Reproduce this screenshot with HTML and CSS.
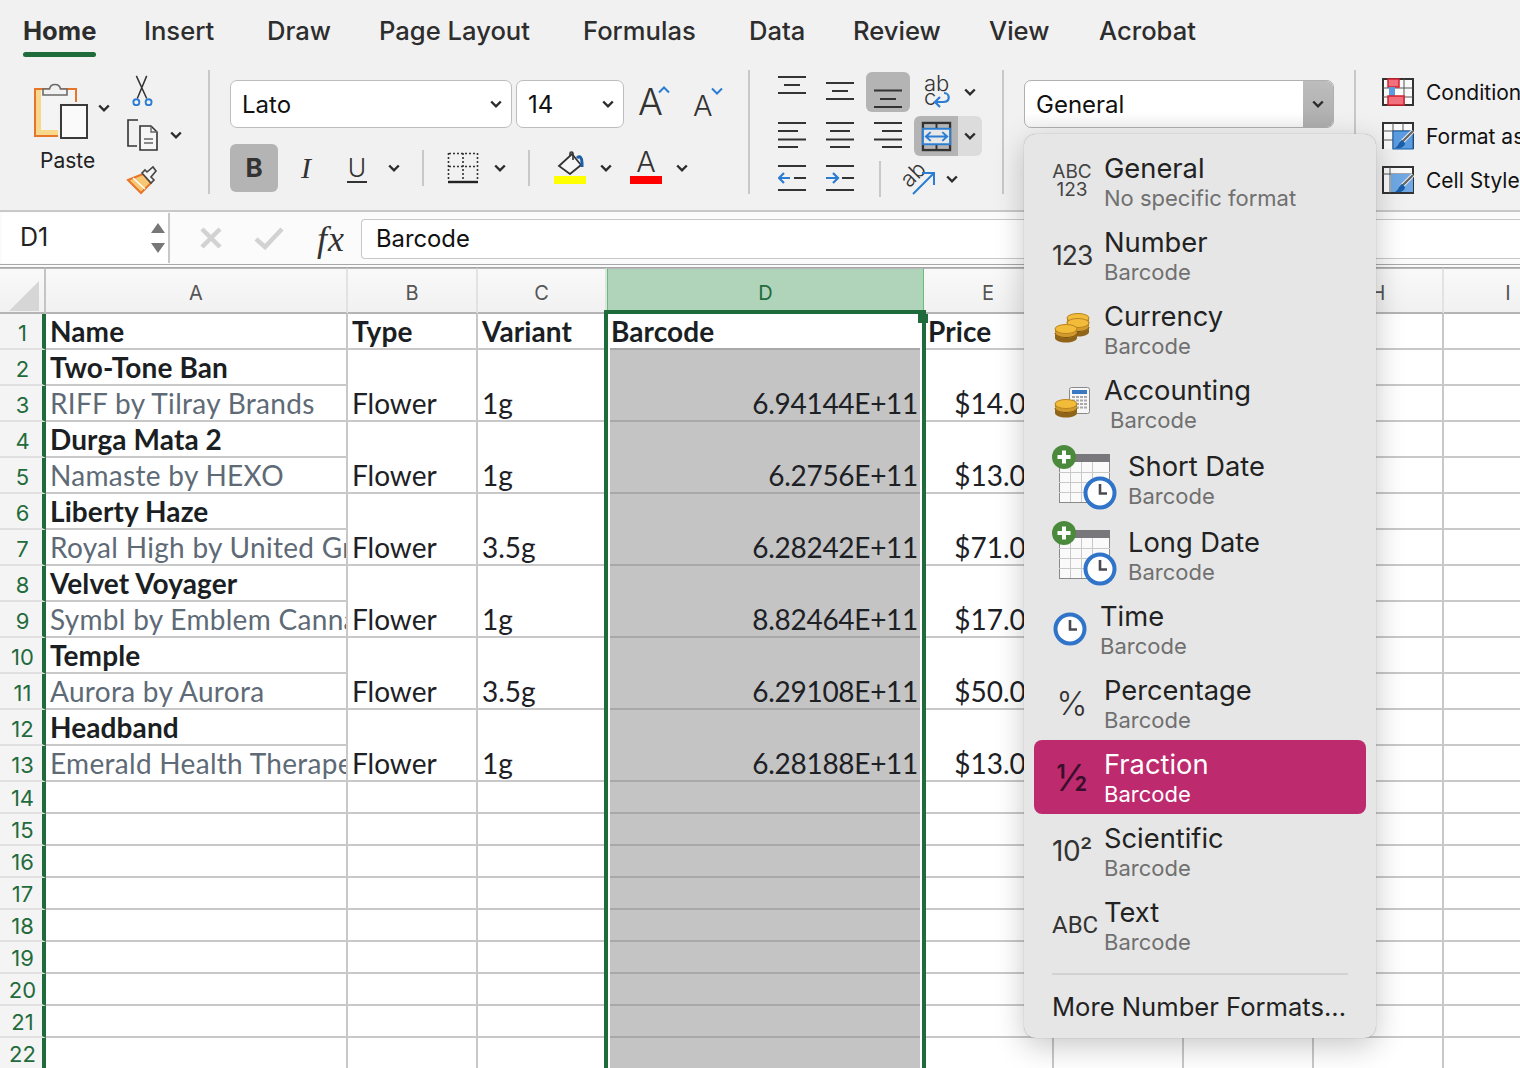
FILE: index.html
```html
<!DOCTYPE html>
<html lang="en">
<head>
<meta charset="utf-8">
<title>Excel number format menu</title>
<link rel="stylesheet" href="styles.css">
</head>
<body>
<svg class="defs" aria-hidden="true">
  <symbol id="chev" viewBox="0 0 12 8"><path d="M1.2 1.5 6 6.3 10.8 1.5" fill="none" stroke="#2b2b2b" stroke-width="2.4"/></symbol>
  <symbol id="clock" viewBox="0 0 34 34"><circle cx="17" cy="17" r="14.5" fill="#fff" stroke="#2f74c9" stroke-width="4"/><path d="M17 8v9.500h7" fill="none" stroke="#4a4a50" stroke-width="2.600"/></symbol>
  <symbol id="datei" viewBox="0 0 66 66">
    <rect x="7.500" y="9.500" width="50" height="48" fill="#fafafa" stroke="#8a8a8a"/>
    <rect x="7" y="9" width="51" height="8" fill="#77777c"/>
    <path d="M7 27.500h51M7 37.500h51M7 47.500h51M18.500 17v40M29.500 17v40M40.500 17v40" stroke="#c9c9c9" fill="none"/>
    <circle cx="12" cy="12" r="12" fill="#4b8a3c"/>
    <path d="M12 5.500v13M5.500 12h13" stroke="#fff" stroke-width="4"/>
    <use href="#clock" x="31" y="31" width="34" height="34"/>
  </symbol>
  <symbol id="coin" viewBox="0 0 24 20">
    <path d="M1 5v9c0 2.500 5 4.500 11 4.500s11-2 11-4.500V5z" fill="#8f6318"/>
    <path d="M1 9.500c0 2.500 5 4.500 11 4.500s11-2 11-4.500v-2H1z" fill="#d29a2c"/>
    <path d="M1 9c0 2.500 5 4.500 11 4.500S23 11.500 23 9" fill="none" stroke="#7a5212"/>
    <ellipse cx="12" cy="5" rx="11" ry="4.500" fill="#f3bb3a" stroke="#b98520"/>
  </symbol>
</svg>

<header class="tabs">
  <span class="tab active">Home</span>
  <span class="tab">Insert</span>
  <span class="tab">Draw</span>
  <span class="tab">Page Layout</span>
  <span class="tab">Formulas</span>
  <span class="tab">Data</span>
  <span class="tab">Review</span>
  <span class="tab">View</span>
  <span class="tab">Acrobat</span>
</header>

<section class="ribbon">
  <div class="group clipboard">
    <div class="paste">
      <div class="paste-top">
        <svg class="ic-paste" viewBox="0 0 56 62">
          <rect x="1" y="9" width="41" height="47" fill="#f8d98c" stroke="#e8762a" stroke-width="2"/>
          <rect x="7" y="10" width="34" height="40" fill="#f4f4f4"/>
          <path d="M9 15V9h6.500c1-6 10-6 11 0H33v6z" fill="#f1f1f1" stroke="#6a6a6a" stroke-width="1.600"/>
          <rect x="24" y="22" width="32" height="40" fill="#f1f1f1"/>
          <rect x="27" y="25" width="26" height="33" fill="#fafafa" stroke="#3a3a3a" stroke-width="2"/>
        </svg>
        <svg class="chev chev-paste"><use href="#chev"/></svg>
      </div>
      <span class="paste-label">Paste</span>
    </div>
    <div class="clip-tools">
      <svg class="ic32" viewBox="0 0 32 34">
        <path d="M10 2 21 26M21 2 11 26" stroke="#333" stroke-width="1.600" fill="none"/>
        <circle cx="10" cy="30" r="3.200" fill="none" stroke="#2b7cd3" stroke-width="2"/>
        <circle cx="23" cy="30" r="3.200" fill="none" stroke="#2b7cd3" stroke-width="2"/>
      </svg>
      <div class="clip-row">
        <svg class="ic32" viewBox="0 0 32 32">
          <path d="M12 1H2v26h9" fill="none" stroke="#333" stroke-width="1.600"/>
          <path d="M14 7h11l6 6v18H14z" fill="#f6f6f6" stroke="#333" stroke-width="1.600"/>
          <path d="M25 7v6h6M18 20h9M18 24h9" fill="none" stroke="#666" stroke-width="1.400"/>
        </svg>
        <svg class="chev chev-copy"><use href="#chev"/></svg>
      </div>
      <svg class="ic32" viewBox="0 0 32 32">
        <path d="M2 16l15-6 8 9-10 10z" fill="#f7c773" stroke="#e8762a" stroke-width="2"/>
        <path d="M7 14l12 11" stroke="#fff" stroke-width="1.500"/>
        <path d="M16 9l9 10 3-3-3-3 5-6-3-4-6 5-2-2z" fill="#f4f4f4" stroke="#444" stroke-width="1.600"/>
      </svg>
    </div>
  </div>
  <i class="vsep"></i>

  <div class="group font">
    <div class="font-top">
      <div class="select sel-font"><span>Lato</span><svg class="chev"><use href="#chev"/></svg></div>
      <div class="select sel-size"><span>14</span><svg class="chev"><use href="#chev"/></svg></div>
      <div class="grow-a">A<svg class="caret" viewBox="0 0 12 8"><path d="M1 6.500 6 1.500 11 6.500" fill="none" stroke="#2b7cd3" stroke-width="2"/></svg></div>
      <div class="shrink-a">A<svg class="caret" viewBox="0 0 12 8"><path d="M1 1.500 6 6.500 11 1.500" fill="none" stroke="#2b7cd3" stroke-width="2"/></svg></div>
    </div>
    <div class="font-row">
      <b class="btn-b">B</b>
      <em class="btn-i">I</em>
      <span class="btn-u">U</span>
      <svg class="chev"><use href="#chev"/></svg>
      <i class="hsep"></i>
      <svg class="ic32" viewBox="0 0 32 32">
        <path d="M2 1.500h28M2 14.500h28M1.500 1v27M30.500 1v27M16 1v27" fill="none" stroke="#333" stroke-width="1.600" stroke-dasharray="2 2"/>
        <path d="M1 30h30" stroke="#222" stroke-width="2.400"/>
      </svg>
      <svg class="chev"><use href="#chev"/></svg>
      <i class="hsep"></i>
      <div class="colour">
        <svg class="ic-fill" viewBox="0 0 32 24">
          <path d="M5 15 18 3l9 11-11 9z" fill="#f6f6f6" stroke="#333" stroke-width="1.800"/>
          <path d="M16 5V2.500c0-2 3-2 3 0V9" fill="none" stroke="#333" stroke-width="1.600"/>
          <path d="M23 7c3-3 5 0 5 5v4" fill="none" stroke="#1a5fa8" stroke-width="3"/>
        </svg>
        <i class="bar bar-yellow"></i>
      </div>
      <svg class="chev"><use href="#chev"/></svg>
      <div class="colour">
        <span class="font-a">A</span>
        <i class="bar bar-red"></i>
      </div>
      <svg class="chev"><use href="#chev"/></svg>
    </div>
  </div>
  <i class="vsep"></i>

  <div class="group align">
    <svg class="ic-al ic-tall" viewBox="0 0 28 40"><path d="M0 5h28M6 13h16M0 21h28" stroke="#333" stroke-width="2"/></svg>
    <svg class="ic-al ic-tall" viewBox="0 0 28 40"><path d="M0 11h28M6 19h16M0 27h28" stroke="#333" stroke-width="2"/></svg>
    <div class="al-on"><svg class="ic-al ic-tall" viewBox="0 0 28 40"><path d="M0 18.500h28M6 27h16M0 35h28" stroke="#333" stroke-width="2"/></svg></div>
    <div class="wrap">ab<br>c<svg class="wrap-arrow" viewBox="0 0 18 18"><path d="M11 2c6 0 7 9-1 9H3M7 6l-5 5 5 5" fill="none" stroke="#2b7cd3" stroke-width="2.200"/></svg></div>
    <svg class="chev chev-top"><use href="#chev"/></svg>

    <svg class="ic-al ic-low" viewBox="0 0 28 28"><path d="M0 3h28M0 11h20M0 19.500h28M0 27h20" stroke="#333" stroke-width="2"/></svg>
    <svg class="ic-al ic-low" viewBox="0 0 28 28"><path d="M0 3h28M4 11h20M0 19.500h28M4 27h20" stroke="#333" stroke-width="2"/></svg>
    <svg class="ic-al ic-low" viewBox="0 0 28 28"><path d="M0 3h28M8 11h20M0 19.500h28M8 27h20" stroke="#333" stroke-width="2"/></svg>
    <div class="merge-l">
      <svg class="ic-merge" viewBox="0 0 32 32">
        <rect x="2" y="2" width="28" height="28" fill="none" stroke="#333" stroke-width="2.400"/>
        <path d="M16 2v6M16 24v6" stroke="#333" stroke-width="2"/>
        <rect x="2" y="8" width="28" height="16" fill="#e8e8e8" stroke="#2b7cd3" stroke-width="2"/>
        <path d="M5 16h22M10 11.500 5 16l5 4.500M22 11.500l5 4.500-5 4.500" fill="none" stroke="#2b7cd3" stroke-width="2"/>
      </svg>
    </div>
    <div class="merge-r"><svg class="chev"><use href="#chev"/></svg></div>

    <svg class="ic-al ic-low" viewBox="0 0 28 28"><path d="M0 2h28M16 14h12M0 26h28" stroke="#333" stroke-width="2"/><path d="M1 14h11M6 9l-5 5 5 5" fill="none" stroke="#2b7cd3" stroke-width="2.200"/></svg>
    <svg class="ic-al ic-low" viewBox="0 0 28 28"><path d="M0 2h28M16 14h12M0 26h28" stroke="#333" stroke-width="2"/><path d="M0 14h11M7 9l5 5-5 5" fill="none" stroke="#2b7cd3" stroke-width="2.200"/></svg>
    <div class="orient-row">
      <i class="hsep tall"></i>
      <div class="orient"><span class="orient-text">ab</span><svg class="orient-arrow" viewBox="0 0 24 24"><path d="M1 23 22 2M10 2h12v12" fill="none" stroke="#2b7cd3" stroke-width="2"/></svg></div>
      <svg class="chev"><use href="#chev"/></svg>
    </div>
  </div>
  <i class="vsep"></i>

  <div class="group number">
    <div class="select sel-num"><span>General</span><div class="sel-num-btn"><svg class="chev"><use href="#chev"/></svg></div></div>
  </div>
  <i class="vsep"></i>

  <div class="group styles">
    <div class="style-row">
      <svg class="ic-style" viewBox="0 0 32 28">
        <rect x="1" y="1" width="30" height="26" fill="#fafafa" stroke="#333" stroke-width="2"/>
        <path d="M1 10h30M1 19h30M11 1v26M22 1v26" stroke="#555"/>
        <rect x="6" y="1" width="11" height="8" fill="#f0707e" stroke="#d3202e" stroke-width="1.500"/>
        <rect x="7" y="9" width="6" height="9" fill="#5b9be0"/>
        <rect x="6" y="18" width="16" height="9" fill="#f0707e" stroke="#d3202e" stroke-width="1.500"/>
      </svg>
      <span>Conditional Formatting</span>
    </div>
    <div class="style-row">
      <svg class="ic-style" viewBox="0 0 32 28">
        <path d="M1 27V1h30v26" fill="#fafafa" stroke="#333" stroke-width="2"/>
        <path d="M1 9h30M1 18h30M11 1v26M21 1v26" stroke="#555"/>
        <rect x="11" y="9" width="20" height="18" fill="#5b9be0" stroke="#1a5fa8"/>
        <path d="M31 9 19 21" stroke="#fafafa" stroke-width="4"/>
        <path d="M31 9 20 20" stroke="#666" stroke-width="2.400"/>
        <path d="M20 18c-3 1-3 6-7 8 5 1 10-1 10-5z" fill="#1a5fa8"/>
      </svg>
      <span>Format as Table</span>
    </div>
    <div class="style-row">
      <svg class="ic-style" viewBox="0 0 32 28">
        <rect x="1" y="1" width="30" height="26" fill="#fafafa" stroke="#333" stroke-width="2"/>
        <path d="M1 8h30M8 1v26" stroke="#555"/>
        <rect x="9" y="8" width="22" height="18" fill="#6fa8e4"/>
        <path d="M31 9 19 21" stroke="#fafafa" stroke-width="4"/>
        <path d="M31 9 20 20" stroke="#666" stroke-width="2.400"/>
        <path d="M20 18c-3 1-3 6-7 8 5 1 10-1 10-5z" fill="#1a5fa8"/>
      </svg>
      <span>Cell Styles</span>
    </div>
  </div>
</section>

<section class="fbar">
  <div class="namebox">
    <span>D1</span>
    <div class="spin"><i class="up"></i><i class="down"></i></div>
  </div>
  <div class="fbtns">
    <svg class="ic-x" viewBox="0 0 24 24"><path d="M3 3l18 18M21 3 3 21" stroke="#d2d2d2" stroke-width="4.500"/></svg>
    <svg class="ic-ok" viewBox="0 0 30 24"><path d="M2 13l9 8L28 3" fill="none" stroke="#d2d2d2" stroke-width="4.500"/></svg>
    <span class="fx">fx</span>
  </div>
  <div class="finput">Barcode</div>
</section>

<section class="sheet">
  <table class="grid">
    <colgroup><col class="c-h"><col class="c-a"><col class="c-b"><col class="c-c"><col class="c-d"><col class="c-e"><col class="c-e"><col class="c-e"><col class="c-e"><col class="c-e"></colgroup>
    <thead>
      <tr><th class="corner"><svg class="tri" viewBox="0 0 32 32"><path d="M0 32 30 2v30z" fill="#d6d6d6"/></svg></th><th>A</th><th>B</th><th>C</th><th class="col-sel">D</th><th>E</th><th>F</th><th>G</th><th>H</th><th>I</th></tr>
    </thead>
    <tbody>
      <tr class="tall"><th>1</th><td class="bold">Name</td><td class="bold">Type</td><td class="bold">Variant</td><td class="bold d1">Barcode</td><td class="bold">Price</td><td></td><td></td><td></td><td></td></tr>
      <tr class="tall"><th>2</th><td class="bold">Two-Tone Ban</td><td rowspan="2">Flower</td><td rowspan="2">1g</td><td rowspan="2" class="d num">6.94144E+11</td><td rowspan="2" class="num price">$14.00</td><td></td><td></td><td></td><td></td></tr>
      <tr class="tall"><th>3</th><td class="brand">RIFF by Tilray Brands</td><td></td><td></td><td></td><td></td></tr>
      <tr class="tall"><th>4</th><td class="bold">Durga Mata 2</td><td rowspan="2">Flower</td><td rowspan="2">1g</td><td rowspan="2" class="d num">6.2756E+11</td><td rowspan="2" class="num price">$13.00</td><td></td><td></td><td></td><td></td></tr>
      <tr class="tall"><th>5</th><td class="brand">Namaste by HEXO</td><td></td><td></td><td></td><td></td></tr>
      <tr class="tall"><th>6</th><td class="bold">Liberty Haze</td><td rowspan="2">Flower</td><td rowspan="2">3.5g</td><td rowspan="2" class="d num">6.28242E+11</td><td rowspan="2" class="num price">$71.00</td><td></td><td></td><td></td><td></td></tr>
      <tr class="tall"><th>7</th><td class="brand">Royal High by United Greens</td><td></td><td></td><td></td><td></td></tr>
      <tr class="tall"><th>8</th><td class="bold">Velvet Voyager</td><td rowspan="2">Flower</td><td rowspan="2">1g</td><td rowspan="2" class="d num">8.82464E+11</td><td rowspan="2" class="num price">$17.00</td><td></td><td></td><td></td><td></td></tr>
      <tr class="tall"><th>9</th><td class="brand">Symbl by Emblem Cannabis</td><td></td><td></td><td></td><td></td></tr>
      <tr class="tall"><th>10</th><td class="bold">Temple</td><td rowspan="2">Flower</td><td rowspan="2">3.5g</td><td rowspan="2" class="d num">6.29108E+11</td><td rowspan="2" class="num price">$50.00</td><td></td><td></td><td></td><td></td></tr>
      <tr class="tall"><th>11</th><td class="brand">Aurora by Aurora</td><td></td><td></td><td></td><td></td></tr>
      <tr class="tall"><th>12</th><td class="bold">Headband</td><td rowspan="2">Flower</td><td rowspan="2">1g</td><td rowspan="2" class="d num">6.28188E+11</td><td rowspan="2" class="num price">$13.00</td><td></td><td></td><td></td><td></td></tr>
      <tr class="tall"><th>13</th><td class="brand">Emerald Health Therapeutics</td><td></td><td></td><td></td><td></td></tr>
      <tr><th>14</th><td></td><td></td><td></td><td class="d"></td><td></td><td></td><td></td><td></td><td></td></tr>
      <tr><th>15</th><td></td><td></td><td></td><td class="d"></td><td></td><td></td><td></td><td></td><td></td></tr>
      <tr><th>16</th><td></td><td></td><td></td><td class="d"></td><td></td><td></td><td></td><td></td><td></td></tr>
      <tr><th>17</th><td></td><td></td><td></td><td class="d"></td><td></td><td></td><td></td><td></td><td></td></tr>
      <tr><th>18</th><td></td><td></td><td></td><td class="d"></td><td></td><td></td><td></td><td></td><td></td></tr>
      <tr><th>19</th><td></td><td></td><td></td><td class="d"></td><td></td><td></td><td></td><td></td><td></td></tr>
      <tr><th>20</th><td></td><td></td><td></td><td class="d"></td><td></td><td></td><td></td><td></td><td></td></tr>
      <tr><th>21</th><td></td><td></td><td></td><td class="d"></td><td></td><td></td><td></td><td></td><td></td></tr>
      <tr><th>22</th><td></td><td></td><td></td><td class="d"></td><td></td><td></td><td></td><td></td><td></td></tr>
    </tbody>
  </table>
  <div class="selection"><i class="handle"></i></div>
</section>

<nav class="menu">
  <div class="item">
    <div class="ico"><div class="abc123"><span>ABC</span><span>123</span></div></div>
    <div class="txt"><div class="t">General</div><div class="s">No specific format</div></div>
  </div>
  <div class="item">
    <div class="ico"><span class="g-123">123</span></div>
    <div class="txt"><div class="t">Number</div><div class="s">Barcode</div></div>
  </div>
  <div class="item">
    <div class="ico">
      <svg class="ic-coins" viewBox="0 0 36 32"><use href="#coin" x="12" y="0" width="24" height="20"/><use href="#coin" x="12" y="5" width="24" height="20"/><use href="#coin" x="0" y="11" width="24" height="20"/></svg>
    </div>
    <div class="txt"><div class="t">Currency</div><div class="s">Barcode</div></div>
  </div>
  <div class="item">
    <div class="ico">
      <svg class="ic-coins" viewBox="0 0 36 32">
        <rect x="15.500" y="0.500" width="20" height="26" rx="2" fill="#f7f7f7" stroke="#8a8a8a"/>
        <rect x="18" y="3" width="15" height="4" fill="#3b78c4"/>
        <path d="M18 10h15M18 13.500h15M18 17h15M18 20.500h15" stroke="#a8a8a8" stroke-width="2" stroke-dasharray="3 1"/>
        <use href="#coin" x="0" y="12" width="24" height="20"/>
      </svg>
    </div>
    <div class="txt"><div class="t">Accounting</div><div class="s sub-shift">Barcode</div></div>
  </div>
  <div class="item item-date">
    <div class="ico ico-date"><svg class="ic-date"><use href="#datei"/></svg></div>
    <div class="txt"><div class="t">Short Date</div><div class="s">Barcode</div></div>
  </div>
  <div class="item item-date">
    <div class="ico ico-date"><svg class="ic-date"><use href="#datei"/></svg></div>
    <div class="txt"><div class="t">Long Date</div><div class="s">Barcode</div></div>
  </div>
  <div class="item">
    <div class="ico ico-time"><svg class="ic-clock"><use href="#clock"/></svg></div>
    <div class="txt"><div class="t">Time</div><div class="s">Barcode</div></div>
  </div>
  <div class="item">
    <div class="ico"><span class="g-pct">%</span></div>
    <div class="txt"><div class="t">Percentage</div><div class="s">Barcode</div></div>
  </div>
  <div class="item active">
    <div class="ico"><span class="g-frac">½</span></div>
    <div class="txt"><div class="t">Fraction</div><div class="s">Barcode</div></div>
  </div>
  <div class="item">
    <div class="ico"><span class="g-sci">10²</span></div>
    <div class="txt"><div class="t">Scientific</div><div class="s">Barcode</div></div>
  </div>
  <div class="item">
    <div class="ico"><span class="g-abc">ABC</span></div>
    <div class="txt"><div class="t">Text</div><div class="s">Barcode</div></div>
  </div>
  <div class="menu-sep"></div>
  <div class="more">More Number Formats...</div>
</nav>
</body>
</html>
```
FILE: styles.css
```css
* { box-sizing: border-box; }
html, body { margin: 0; padding: 0; }
body {
  position: relative;
  width: 1520px;
  height: 1068px;
  overflow: hidden;
  background: #f1f1f1;
  font-family: Inter, "Liberation Sans", sans-serif;
  color: #222;
}
i { font-style: normal; display: block; }
svg { display: block; flex: none; }
.defs { position: absolute; width: 0; height: 0; }

/* tabs */
.tabs {
  display: grid;
  grid-template-columns: 121px 123px 112px 204px 166px 104px 136px 110px auto;
  height: 62px;
  padding: 16px 0 0 23px;
  font-size: 25.6px;
  font-weight: 500;
  color: #2d2d2d;
  line-height: 30px;
}
.tab { justify-self: start; position: relative; }
.tab.active { font-weight: 700; }
.tab.active::after {
  content: "";
  position: absolute;
  left: 0; right: 0; top: 36px;
  height: 5px;
  border-radius: 3px;
  background: #1f6b3c;
}

/* ribbon */
.ribbon {
  display: flex;
  align-items: flex-start;
  height: 148px;
  padding-top: 8px;
  overflow: hidden;
}
.group { flex: none; }
.vsep { flex: none; width: 2px; height: 124px; margin: 0 1px 0 -1px; background: #c8c8c8; }
.chev { width: 12px; height: 8px; }

.clipboard { width: 209px; height: 140px; display: flex; padding-left: 34px; }
.paste { width: 78px; padding-top: 10px; }
.paste-top { display: flex; height: 64px; }
.ic-paste { width: 56px; height: 62px; }
.chev-paste { margin: 24px 0 0 8px; }
.paste-label { display: block; margin: 2px 0 0 6px; font-size: 21px; line-height: 30px; color: #222; }
.clip-tools { margin-left: 14px; padding-top: 4px; display: flex; flex-direction: column; gap: 13px; }
.ic32 { width: 32px; height: 32px; }
.clip-row { display: flex; align-items: center; }
.chev-copy { margin-left: 12px; }

.font { width: 538px; padding: 10px 0 0 19px; }
.font-top { display: flex; align-items: flex-start; gap: 4px; height: 63px; }
.select {
  display: flex;
  align-items: center;
  justify-content: space-between;
  height: 48px;
  background: #fff;
  border: 1.5px solid #bdbdbd;
  border-radius: 7px;
  font-size: 24px;
  color: #111;
  padding: 0 9px 0 11px;
}
.sel-font { width: 282px; }
.sel-size { width: 108px; }
.grow-a, .shrink-a { display: flex; font-weight: 300; color: #333; }
.grow-a { font-size: 37px; line-height: 44px; margin: 0 0 0 10px; width: 51px; }
.shrink-a { font-size: 29px; line-height: 40px; padding-top: 6px; }
.caret { width: 12px; height: 8px; margin: 6px 0 0 -5px; }
.shrink-a .caret { margin: 1px 0 0 -2px; }
.font-row {
  display: grid;
  grid-template-columns: 48px 56px 46px 28px 30px 50px 24px 34px 48px 24px 56px 16px;
  align-items: center;
  justify-items: center;
  height: 50px;
}
.btn-b {
  width: 48px; height: 48px;
  background: #b4b4b4;
  border-radius: 6px;
  font-size: 26px;
  line-height: 48px;
  text-align: center;
  color: #333;
}
.btn-i { font: italic 30px/48px "Liberation Serif", serif; color: #333; }
.btn-u { font-size: 25px; line-height: 28px; font-weight: 300; border-bottom: 2px solid #333; height: 29px; padding: 0 1px; color: #333; }
.hsep { width: 2px; height: 36px; background: #c8c8c8; }
.colour { width: 32px; height: 40px; margin-bottom: 8px; display: flex; flex-direction: column; justify-content: flex-end; align-items: center; }
.ic-fill { width: 32px; height: 24px; margin-bottom: 1px; }
.font-a { font-size: 29px; line-height: 29px; font-weight: 300; color: #333; }
.bar { width: 32px; height: 8px; flex: none; }
.bar-yellow { background: #ff0; }
.bar-red { background: #f00; }

.align {
  width: 252px;
  height: 128px;
  margin-top: 2px;
  padding-left: 17px;
  display: grid;
  grid-template-columns: 48px 48px 48px 46px 24px;
  grid-template-rows: 44px 44px 38px;
  align-items: start;
  justify-items: center;
}
.ic-al { width: 28px; height: 28px; }
.ic-al.ic-tall { height: 40px; }
.ic-low { margin-top: 4px; }
.chev-top { margin-top: 16px; }
.al-on { width: 44px; height: 40px; background: #b4b4b4; border-radius: 6px; display: flex; justify-content: center; }
.wrap { position: relative; width: 30px; font-size: 22px; line-height: 14px; font-weight: 300; color: #333; padding-left: 4px; margin-top: 4px; }
.wrap-arrow { position: absolute; left: 13px; top: 15px; width: 18px; height: 18px; }
.merge-l, .merge-r { height: 40px; display: flex; align-items: center; justify-content: center; justify-self: stretch; }
.merge-l { margin-left: 2px; background: #b4b4b4; border-radius: 6px 0 0 6px; }
.merge-r { background: #dcdcdc; border-radius: 0 6px 6px 0; }
.ic-merge { width: 31px; height: 31px; }
.orient-row { grid-column: 3 / 6; justify-self: stretch; height: 38px; display: flex; align-items: center; padding-left: 15px; }
.hsep.tall { margin-right: 21px; }
.orient { position: relative; width: 34px; height: 32px; }
.orient-text { position: absolute; left: -2px; top: 0; font-size: 22px; line-height: 22px; font-weight: 300; color: #333; transform: rotate(-45deg); }
.orient-arrow { position: absolute; left: 10px; top: 8px; width: 24px; height: 24px; }
.orient-row .chev { margin-left: 10px; }

.number { width: 350px; padding: 10px 0 0 19px; }
.sel-num { width: 310px; padding: 0 0 0 11px; overflow: hidden; background: linear-gradient(#fff, #fff 70%, #f4f4f4); border-color: #b0b0b0; }
.sel-num-btn { width: 30px; height: 100%; background: linear-gradient(#bdbdbd, #adadad); display: flex; align-items: center; justify-content: center; }

.styles { padding: 0 0 0 25px; white-space: nowrap; }
.style-row { display: flex; align-items: center; height: 44px; font-size: 21px; color: #111; }
.ic-style { width: 32px; height: 28px; margin-right: 12px; }

/* formula bar */
.fbar {
  display: flex;
  height: 58px;
  background: #fbfbfb;
  border-top: 2px solid #c8c8c8;
  border-bottom: 4px double #a8a8a8;
}
.namebox {
  width: 168px;
  margin: 1px 0 0 2px;
  height: 50px;
  background: #fff;
  border-right: 2px solid #c8c8c8;
  display: flex;
  align-items: center;
  justify-content: space-between;
  padding: 0 3px 2px 18px;
  font-size: 25px;
  color: #222;
}
.spin { display: flex; flex-direction: column; gap: 10px; margin-top: 2px; }
.up, .down { width: 0; height: 0; border-left: 7px solid transparent; border-right: 7px solid transparent; }
.up { border-bottom: 10px solid #777; }
.down { border-top: 10px solid #777; }
.fbtns { width: 191px; display: flex; align-items: center; padding-left: 29px; }
.ic-x { width: 24px; height: 24px; margin-right: 31px; }
.ic-ok { width: 30px; height: 24px; margin-right: 33px; }
.fx { font: italic 36px/40px "Liberation Serif", serif; letter-spacing: 1px; padding-top: 2px; color: #333; }
.finput {
  flex: 1;
  margin-top: 7px;
  height: 40px;
  background: #fff;
  border: 1px solid #c8c8c8;
  border-right: 0;
  border-radius: 4px 0 0 4px;
  padding-left: 14px;
  font-size: 23.8px;
  line-height: 38px;
  color: #111;
}

/* sheet */
.sheet { position: relative; height: 800px; overflow: hidden; background: #fff; }
.grid { border-collapse: separate; border-spacing: 0; table-layout: fixed; width: 1574px; }
.c-h { width: 46px; } .c-a { width: 302px; } .c-b { width: 130px; } .c-c { width: 129px; } .c-d { width: 317px; } .c-e { width: 130px; }
thead th {
  height: 46px;
  padding: 4px 0 0;
  background: linear-gradient(#f9f9f9, #f1f1f1);
  border-top: 1px solid #b8b8b8;
  border-right: 2px solid #e2e2e2;
  border-bottom: 2px solid #b4b4b4;
  font-size: 20px;
  font-weight: 400;
  color: #555;
}
thead th.corner { border-right: 2px solid #c4c4c4; padding: 0; }
.tri { width: 32px; height: 32px; margin: 9px 0 0 9px; }
thead th.col-sel { background: #b0d4b9; color: #1f6b3c; border-left: 1px solid #62c07a; border-right: 1px solid #62c07a; }
tbody th {
  height: 32px;
  padding: 2px 0 0 3px;
  background: #f4f4f4;
  border-right: 4px solid #1f6b3c;
  border-bottom: 2px solid #e0e0e0;
  font-size: 22px;
  font-weight: 400;
  color: #1f6b3c;
}
td {
  height: 32px;
  padding: 0 3px 1px 4px;
  border-right: 2px solid #c8c8c8;
  border-bottom: 2px solid #c8c8c8;
  font: 28px/32px Lato, "Liberation Sans", sans-serif;
  color: #1d2125;
  vertical-align: bottom;
  white-space: nowrap;
  overflow: hidden;
}
tr.tall td, tr.tall th { height: 36px; }
tr.tall th { padding-top: 4px; }
td.bold { font-weight: 700; color: #1b1f23; letter-spacing: .1px; }
td.brand { color: #5e6a76; letter-spacing: .3px; }
td.num { text-align: right; letter-spacing: -.3px; }
td.price { padding-right: 10px; letter-spacing: 0; }
td.d { background: #c4c4c4; border-bottom-color: #a8a8a8; padding-right: 4px; }
td.d1 { border-bottom-color: #a8a8a8; }
.selection {
  position: absolute;
  left: 604px; top: 42px;
  width: 322px; bottom: 0;
  border: 4px solid #1f6b3c;
  border-bottom: 0;
  box-shadow: inset 2px 0 #fff, inset -2px 0 #fff;
  pointer-events: none;
}
.handle {
  position: absolute;
  right: -6px; top: 0;
  width: 10px; height: 9px;
  background: #1f6b3c;
}

/* menu */
.menu {
  position: absolute;
  left: 1024px; top: 134px;
  width: 352px; height: 904px;
  padding-top: 10px;
  background: #e6e6e6;
  border-radius: 12px;
  box-shadow: 0 0 1px rgba(0,0,0,.4), 0 8px 30px rgba(0,0,0,.22);
  display: flex;
  flex-direction: column;
}
.item {
  display: flex;
  flex: none;
  height: 74px;
  margin: 0 10px;
  border-radius: 8px;
}
.item-date { height: 76px; }
.ico { flex: none; width: 70px; padding-left: 18px; display: flex; align-items: center; }
.ico > * { flex: none; }
.ico-date { width: 94px; }
.ico-time { width: 66px; padding-left: 19px; }
.txt { padding-top: 10px; }
.item-date .txt { padding-top: 12px; }
.t { font-size: 27.3px; line-height: 30px; color: #222; }
.s { font-size: 22px; line-height: 30px; margin-top: -1px; color: #707070; }
.sub-shift { margin-left: 6px; }
.item.active { background: #bd2a6e; }
.item.active .t, .item.active .s { color: #fff; }
.abc123 { width: 40px; display: flex; flex-direction: column; align-items: center; font-size: 19px; line-height: 18px; color: #444; }
.g-123 { width: 40px; text-align: center; font-size: 26.5px; letter-spacing: -1px; color: #333; }
.ic-coins { width: 36px; height: 32px; margin-left: 2px; }
.ic-date { width: 66px; height: 66px; }
.ic-clock { width: 34px; height: 34px; }
.g-pct { width: 40px; text-align: center; font-size: 33px; font-weight: 300; color: #333; }
.g-frac { width: 40px; text-align: center; font-size: 37px; color: #3a0f2c; }
.g-sci { width: 40px; text-align: center; font-size: 28px; color: #333; white-space: nowrap; letter-spacing: -.5px; }
.g-abc { width: 40px; text-align: center; font-family: Roboto, sans-serif; font-size: 24px; color: #333; }
.menu-sep { height: 2px; margin: 11px 28px 0; background: #d2d2d2; flex: none; }
.more { margin: 17px 0 0 28px; font-size: 25.6px; line-height: 30px; color: #222; white-space: nowrap; }
```
